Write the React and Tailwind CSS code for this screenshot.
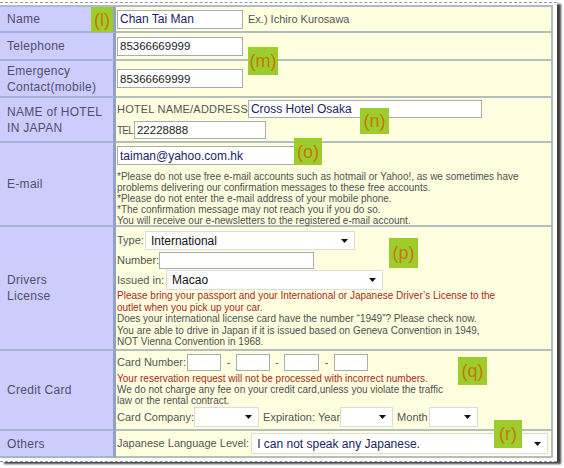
import React from "react";

function TextBox({ value = "", className = "" }) {
  return (
    <input
      readOnly
      defaultValue={value}
      className={`shrink-0 border border-[#a5acb2] bg-white px-[2px] outline-none ${className}`}
    />
  );
}

function Dropdown({ value = "", className = "", textClass = "text-[#111]" }) {
  return (
    <div
      className={`shrink-0 flex items-center border border-[#dcdcdc] bg-white pl-[5px] text-[12px] ${textClass} ${className}`}
    >
      <span className="whitespace-nowrap">{value}</span>
      <svg className="ml-auto mr-[6px] shrink-0" width="7" height="4" viewBox="0 0 7 4">
        <path d="M0 0h7L3.5 4z" fill="#111" />
      </svg>
    </div>
  );
}

function Row({ label, height, valueClass = "", children }) {
  return (
    <div className={`flex ${height}`}>
      <div className="w-[116px] shrink-0 flex items-center bg-[#ccccff] border-r-[3px] border-r-[#8ea2c4] border-b-2 border-b-[#a4b4d6] pl-[7px] text-[12px] leading-[16px] tracking-[0.3px] text-[#4e4e6c]">
        <div>{label}</div>
      </div>
      <div className={`flex-1 min-w-0 bg-[#ffffe0] border-b-2 border-r-2 border-[#b3bfbd] pl-[1px] ${valueClass}`}>
        {children}
      </div>
    </div>
  );
}

function Tag({ label, className = "" }) {
  return (
    <div
      className={`absolute flex items-center justify-center bg-[#9ccd2c] text-[18px] leading-none text-[#c8760c] ${className}`}
    >
      {label}
    </div>
  );
}

export default function App() {
  return (
    <div className="relative w-[564px] h-[468px] overflow-hidden bg-white font-['Liberation_Sans',Arial,sans-serif]">
      <div className="mt-[2px] w-[557px] border-y border-dashed border-[#9a9a9a] bg-white pt-[2px] pb-[3px] shadow-[4px_2px_2px_rgba(0,0,0,0.75)]">
        <div className="w-[553px] border-t-2 border-[#aebcca]">
          <Row label="Name" height="h-[26px]" valueClass="flex items-center gap-[5px]">
            <TextBox value="Chan Tai Man" className="w-[126px] h-[19px] text-[12px] text-[#1c2466]" />
            <span className="text-[11px] text-[#555]">Ex.) Ichiro Kurosawa</span>
          </Row>

          <Row label="Telephone" height="h-[28px]" valueClass="flex items-center">
            <TextBox value="85366669999" className="w-[126px] h-[19px] text-[11.5px] text-[#222]" />
          </Row>

          <Row
            label={
              <>
                Emergency
                <br />
                Contact(mobile)
              </>
            }
            height="h-[37px]"
            valueClass="flex items-center"
          >
            <TextBox value="85366669999" className="w-[126px] h-[19px] text-[11.5px] text-[#222]" />
          </Row>

          <Row
            label={
              <>
                NAME of HOTEL
                <br />
                IN JAPAN
              </>
            }
            height="h-[45px]"
            valueClass="flex flex-col justify-center gap-[3px] text-[11px] text-[#555]"
          >
            <div className="flex items-center">
              <span className="whitespace-nowrap tracking-[0.2px]">HOTEL NAME/ADDRESS</span>
              <TextBox value="Cross Hotel Osaka" className="w-[234px] h-[18px] text-[12px] text-[#1c2466]" />
            </div>
            <div className="flex items-center">
              <span className="text-[10px] tracking-[-0.8px]">TEL</span>
              <TextBox value="22228888" className="ml-[1px] w-[132px] h-[18px] text-[11.5px] text-[#222]" />
            </div>
          </Row>

          <Row label="E-mail" height="h-[84px]" valueClass="flex flex-col pt-[3px]">
            <TextBox value="taiman@yahoo.com.hk" className="w-[178px] h-[19px] text-[12px] text-[#1c2466]" />
            <div className="mt-[6px] text-[10px] leading-[11px] text-[#505050]">
              <div>*Please do not use free e-mail accounts such as hotmail or Yahoo!, as we sometimes have</div>
              <div>problems delivering our confirmation messages to these free accounts.</div>
              <div>*Please do not enter the e-mail address of your mobile phone.</div>
              <div>*The confirmation message may not reach you if you do so.</div>
              <div>You will receive our e-newsletters to the registered e-mail account.</div>
            </div>
          </Row>

          <Row
            label={
              <>
                Drivers
                <br />
                License
              </>
            }
            height="h-[124px]"
            valueClass="flex flex-col pt-[4px] text-[11px] text-[#555]"
          >
            <div className="flex items-center">
              <span>Type:</span>
              <Dropdown value="International" className="ml-[1px] w-[210px] h-[19px]" />
            </div>
            <div className="mt-[2px] flex items-center">
              <span>Number:</span>
              <TextBox className="w-[155px] h-[17px] text-[11px]" />
            </div>
            <div className="mt-[1px] flex items-center">
              <span>Issued in:</span>
              <Dropdown value="Macao" className="ml-[2px] w-[217px] h-[20px]" />
            </div>
            <div className="text-[10px] leading-[11.5px]">
              <div className="text-[#a82a22]">
                Please bring your passport and your International or Japanese Driver&rsquo;s License to the
              </div>
              <div className="text-[#a82a22]">outlet when you pick up your car.</div>
              <div className="text-[#505050]">
                Does your international license card have the number &ldquo;1949&rdquo;? Please check now.
              </div>
              <div className="text-[#505050]">
                You are able to drive in Japan if it is issued based on Geneva Convention in 1949,
              </div>
              <div className="text-[#505050]">NOT Vienna Convention in 1968.</div>
            </div>
          </Row>

          <Row label="Credit Card" height="h-[80px]" valueClass="flex flex-col pt-[2px] text-[11px] text-[#555]">
            <div className="flex h-[18px] items-center">
              <span>Card Number:</span>
              <TextBox className="ml-[1px] w-[34px] h-[17px] text-[11px]" />
              <span className="w-[15px] text-center">-</span>
              <TextBox className="w-[34px] h-[17px] text-[11px]" />
              <span className="w-[14px] text-center">-</span>
              <TextBox className="w-[35px] h-[17px] text-[11px]" />
              <span className="w-[15px] text-center">-</span>
              <TextBox className="w-[34px] h-[17px] text-[11px]" />
            </div>
            <div className="mt-[2px] text-[10px] leading-[11px]">
              <div className="text-[#a82a22]">Your reservation request will not be processed with incorrect numbers.</div>
              <div className="text-[#505050]">
                We do not charge any fee on your credit card,unless you violate the traffic
              </div>
              <div className="text-[#505050]">law or the rental contract.</div>
            </div>
            <div className="mt-[1px] flex items-center">
              <span>Card Company:</span>
              <Dropdown className="w-[65px] h-[20px]" />
              <span className="ml-[4px]">Expiration: Year</span>
              <Dropdown className="w-[53px] h-[20px]" />
              <span className="ml-[4px]">Month</span>
              <Dropdown className="ml-[1px] w-[49px] h-[20px]" />
            </div>
          </Row>

          <Row label="Others" height="h-[27px]" valueClass="flex items-center text-[11px] text-[#555]">
            <span className="shrink-0 whitespace-nowrap">Japanese Language Level:</span>
            <Dropdown
              value="I can not speak any Japanese."
              className="ml-[2px] w-[297px] h-[21px]"
              textClass="text-[#1c2466]"
            />
          </Row>
        </div>
      </div>

      <Tag label="(l)" className="left-[91px] top-[7px] w-[22px] h-[25px]" />
      <Tag label="(m)" className="left-[248px] top-[47px] w-[30px] h-[28px]" />
      <Tag label="(n)" className="left-[360px] top-[108px] w-[29px] h-[26px]" />
      <Tag label="(o)" className="left-[294px] top-[138px] w-[28px] h-[27px]" />
      <Tag label="(p)" className="left-[389px] top-[238px] w-[29px] h-[30px]" />
      <Tag label="(q)" className="left-[458px] top-[357px] w-[29px] h-[28px]" />
      <Tag label="(r)" className="left-[494px] top-[420px] w-[28px] h-[28px]" />
    </div>
  );
}
